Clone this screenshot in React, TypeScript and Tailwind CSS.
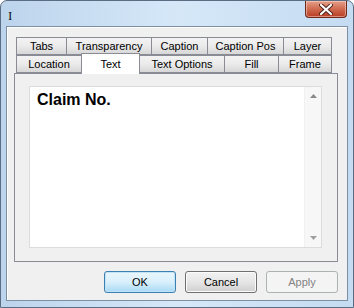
import React from "react"

const row1 = [
  { label: "Tabs", w: 51 },
  { label: "Transparency", w: 86 },
  { label: "Caption", w: 57 },
  { label: "Caption Pos", w: 77 },
  { label: "Layer", w: 49 },
]

const row2 = [
  { label: "Location", w: 66 },
  { label: "Text", w: 59, active: true },
  { label: "Text Options", w: 86 },
  { label: "Fill", w: 55 },
  { label: "Frame", w: 54 },
]

function Tab({ label, w, active }: { label: string; w: number; active?: boolean }) {
  if (active) {
    return (
      <div
        style={{ width: w }}
        className="relative z-10 -mb-px flex h-[21px] shrink-0 items-start justify-center border border-b-0 border-[#898c95] bg-white pt-[2px]"
      >
        {label}
      </div>
    )
  }
  return (
    <div
      style={{ width: w }}
      className="-ml-px flex h-[18px] shrink-0 items-center justify-center border border-[#898c95] bg-gradient-to-b from-[#f3f3f3] via-[#ebebeb] to-[#d7d7d7] first:ml-0"
    >
      {label}
    </div>
  )
}

function Button({ label, kind }: { label: string; kind: "default" | "normal" | "disabled" }) {
  const styles = {
    default:
      "border-[#3c7fb1] bg-gradient-to-b from-[#eaf6fd] via-[#d9f0fc] to-[#a7d9f5] text-black shadow-[inset_0_0_0_1px_#c2e4f6]",
    normal:
      "border-[#707070] bg-gradient-to-b from-[#f2f2f2] via-[#e6e6e6] to-[#cfcfcf] text-black shadow-[inset_0_0_0_1px_#fbfbfb]",
    disabled: "border-[#adb2b5] bg-[#f4f4f4] text-[#838383]",
  }
  return (
    <div
      className={`flex h-[22px] w-[72px] items-center justify-center rounded-[3px] border ${styles[kind]}`}
    >
      {label}
    </div>
  )
}

export default function App() {
  return (
    <div className="h-[308px] w-[354px] overflow-hidden bg-white">
      <div className="flex h-full w-full flex-col rounded-t-[7px] border border-[#5b6d82] bg-gradient-to-r from-[#bcd4ec] via-[#d6e8f8] to-[#c4dbf1] font-['Liberation_Sans',Arial,sans-serif] text-[11px] text-black">
        {/* title bar */}
        <div className="flex h-[25px] items-start justify-between">
          <span className="ml-[7px] mt-[8px] font-['Liberation_Serif',serif] text-[13px] leading-none text-[#111]">
            I
          </span>
          <div className="mr-[6px] flex h-[17px] w-[42px] items-center justify-center rounded-b-[4px] border border-t-0 border-[#6e2a1c] bg-gradient-to-b from-[#e4a08a] via-[#cf6a50] to-[#b83b22] shadow-[inset_0_0_0_1px_rgba(255,220,210,0.5)]">
            <svg width="14" height="11" viewBox="0 0 14 11">
              <path
                d="M2 1 L12 10 M12 1 L2 10"
                stroke="#4a2018"
                strokeWidth="4"
                strokeLinecap="round"
              />
              <path
                d="M2 1 L12 10 M12 1 L2 10"
                stroke="#ffffff"
                strokeWidth="2.2"
                strokeLinecap="round"
              />
            </svg>
          </div>
        </div>

        {/* client area */}
        <div className="mx-[5px] flex flex-1 flex-col border border-[#7d8fa3] bg-[#f0f0f0] pl-[7px] pt-[10px] shadow-[inset_1px_1px_0_#ffffff]">
          <div className="w-[324px]">
            <div className="flex h-[18px] px-[2px]">
              {row1.map((t) => (
                <Tab key={t.label} label={t.label} w={t.w} />
              ))}
            </div>
            <div className="flex h-[18px] items-end px-[2px]">
              {row2.map((t) =>
                t.active ? (
                  <div key={t.label} className="-ml-px flex h-[18px] items-end">
                    <Tab label={t.label} w={t.w} active />
                  </div>
                ) : (
                  <Tab key={t.label} label={t.label} w={t.w} />
                )
              )}
            </div>
            <div className="h-[189px] border border-[#898c95] bg-[#f0f0f0] pb-[13px] pl-[14px] pr-[15px] pt-[12px]">
              <div className="flex h-[162px] w-[293px] border border-[#dcdcdc] bg-white">
                <div className="flex-1 pl-[7px] pt-[3px] text-[16px] font-bold leading-[20px]">
                  Claim No.
                </div>
                <div className="flex w-[17px] flex-col items-center justify-between border-l border-[#f0f0f0] bg-[#f7f7f7] py-[7px]">
                  <svg width="7" height="4" viewBox="0 0 7 4">
                    <path d="M0 4 L3.5 0 L7 4 Z" fill="#8a8a8a" />
                  </svg>
                  <svg width="7" height="4" viewBox="0 0 7 4">
                    <path d="M0 0 L3.5 4 L7 0 Z" fill="#a0a0a0" />
                  </svg>
                </div>
              </div>
            </div>
          </div>
          <div className="mt-[9px] flex w-[324px] justify-end gap-[9px]">
            <Button label="OK" kind="default" />
            <Button label="Cancel" kind="normal" />
            <Button label="Apply" kind="disabled" />
          </div>
        </div>
        <div className="h-[6px]" />
      </div>
    </div>
  )
}
